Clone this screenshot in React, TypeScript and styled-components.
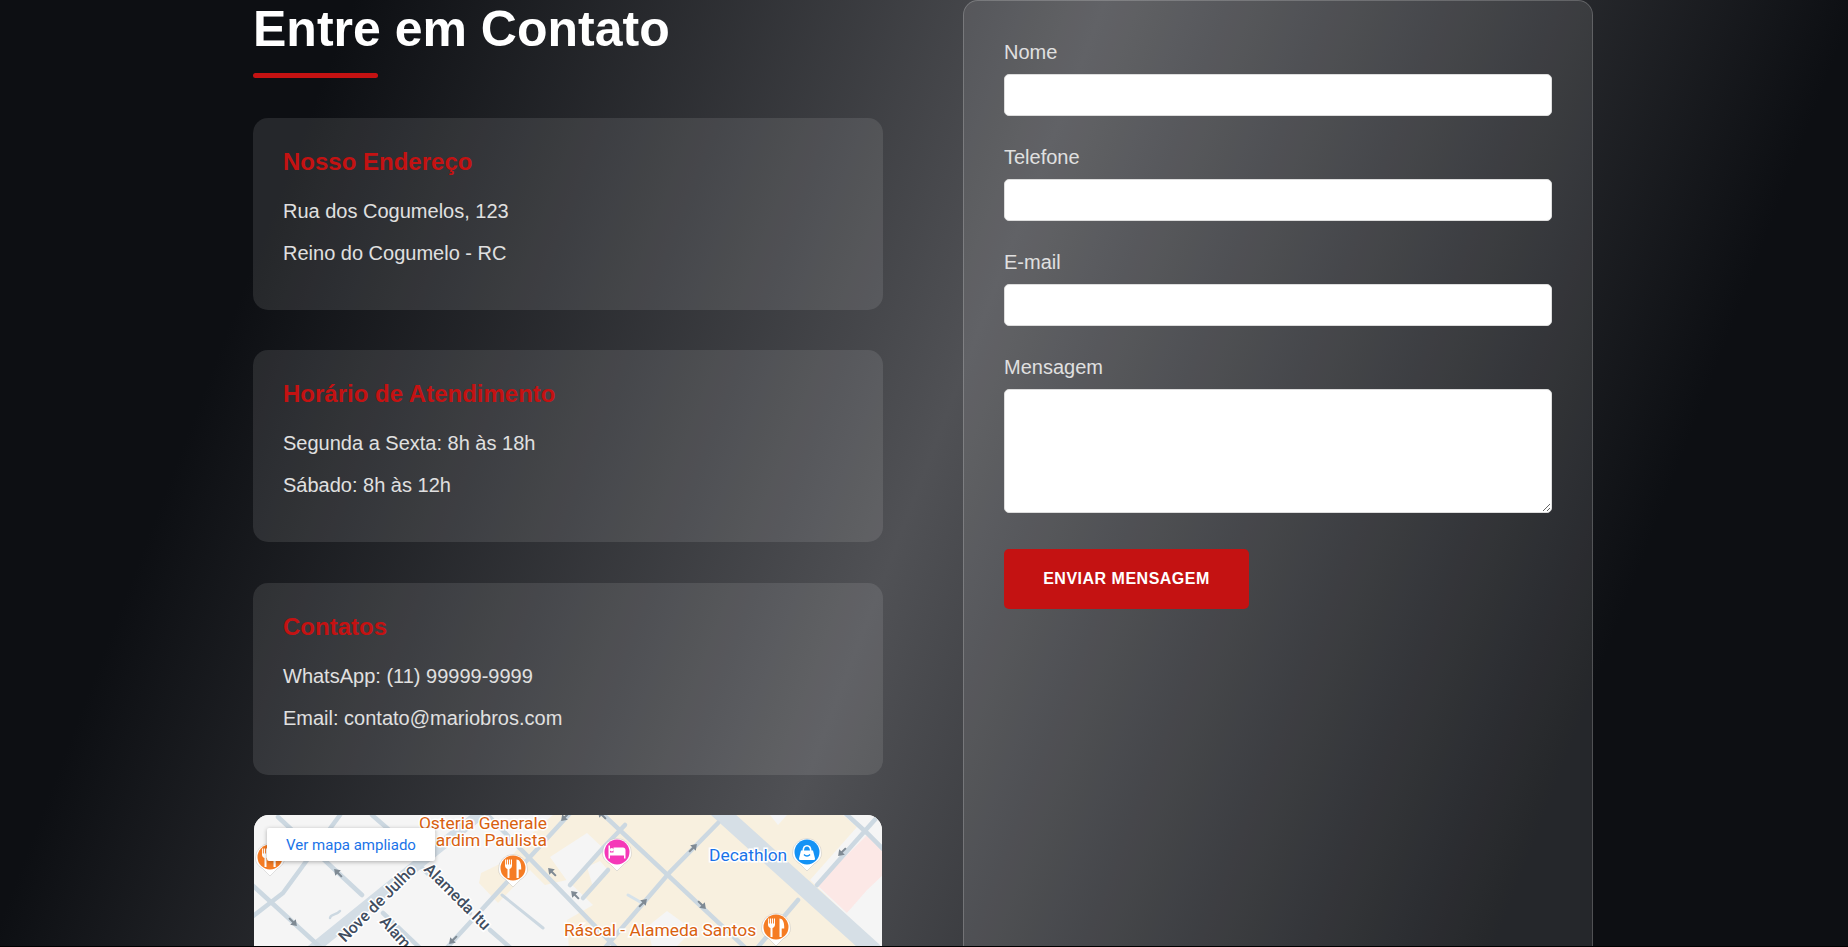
import React from 'react';
import styled, { createGlobalStyle } from 'styled-components';

const GlobalStyle = createGlobalStyle`
  html, body {
    margin: 0;
    padding: 0;
    height: 100%;
    overflow: hidden;
    background: #000;
  }
  * {
    box-sizing: border-box;
  }
`;

const Page = styled.div`
  height: 946px;
  margin-bottom: 1px;
  padding-right: 2px;
  overflow: hidden;
  font-family: 'Liberation Sans', Arial, sans-serif;
  background: linear-gradient(111deg, #0d0f13 16%, #505155 50%, #0d0f13 84%);
`;

const Container = styled.div`
  width: 1340px;
  margin: 0 auto;
  display: grid;
  grid-template-columns: 630px 630px;
  justify-content: space-between;
`;

const InfoColumn = styled.div`
  display: flex;
  flex-direction: column;
`;

const Title = styled.h2`
  margin: 0;
  font-size: 50px;
  line-height: 58px;
  font-weight: 700;
  color: #fff;
`;

const TitleBar = styled.div`
  width: 125px;
  height: 5px;
  margin: 15px 0 40px;
  border-radius: 3px;
  background: #c41212;
`;

const Card = styled.section`
  height: 192px;
  margin-bottom: 40.4px;
  padding: 30px;
  border-radius: 15px;
  background: rgba(255, 255, 255, 0.1);
`;

const CardTitle = styled.h3`
  margin: 0 0 22px;
  font-size: 24px;
  line-height: 28px;
  font-weight: 700;
  color: #c41212;
`;

const CardLine = styled.p`
  margin: 0 0 15px;
  font-size: 20px;
  line-height: 27px;
  color: #e0e0e0;
`;

const MapFrame = styled.div`
  position: relative;
  height: 260px;
  margin: 0 1px;
  border-radius: 15px;
  overflow: hidden;
  background: #f5f5f5;

  svg {
    display: block;
    margin-left: -1px;
  }
`;

const MapLink = styled.a`
  position: absolute;
  top: 13px;
  left: 13px;
  width: 168px;
  height: 33px;
  display: flex;
  align-items: center;
  justify-content: center;
  border-radius: 2px;
  background: #fff;
  box-shadow: 0 1px 4px rgba(0, 0, 0, 0.3);
  font-family: Roboto, sans-serif;
  font-size: 15px;
  color: #1a73e8;
`;

const FormPanel = styled.form`
  height: 980px;
  padding: 40px;
  border: 1px solid rgba(255, 255, 255, 0.2);
  border-radius: 15px;
  background: rgba(255, 255, 255, 0.1);
`;

const Field = styled.div`
  margin-bottom: 30px;
`;

const Label = styled.label`
  display: block;
  margin-bottom: 10px;
  font-size: 20px;
  line-height: 23px;
  color: #e0e0e0;
`;

const TextInput = styled.input`
  display: block;
  width: 100%;
  height: 42px;
  border: 1px solid #ddd;
  border-radius: 5px;
  background: #fff;
`;

const TextArea = styled.textarea`
  display: block;
  width: 100%;
  height: 124px;
  border: 1px solid #ddd;
  border-radius: 5px;
  background: #fff;
  resize: vertical;
`;

const SubmitButton = styled.button`
  display: block;
  width: 245px;
  height: 60px;
  margin-top: 36px;
  border: none;
  border-radius: 5px;
  background: #c41212;
  color: #fff;
  font-family: inherit;
  font-size: 16px;
  font-weight: 700;
  letter-spacing: 0.5px;
  text-transform: uppercase;
`;

const cards = [
  { title: 'Nosso Endereço', lines: ['Rua dos Cogumelos, 123', 'Reino do Cogumelo - RC'] },
  { title: 'Horário de Atendimento', lines: ['Segunda a Sexta: 8h às 18h', 'Sábado: 8h às 12h'] },
  { title: 'Contatos', lines: ['WhatsApp: (11) 99999-9999', 'Email: contato@mariobros.com'] },
];

const Pin: React.FC<{ x: number; y: number; color: string; children?: React.ReactNode }> = ({ x, y, color, children }) => (
  <g transform={`translate(${x} ${y})`}>
    <path d="M-14.500 1a14.500 14.500 0 1 1 29 0c0 5-3 8-7 10.500l-7.500 7.500-7.500-7.500c-4-2.500-7-5.500-7-10.500z" fill="#fff" stroke="rgba(90,90,90,0.25)" strokeWidth="0.7" />
    <circle r="12.500" fill={color} />
    {children}
  </g>
);

const Cutlery = () => (
  <path d="M-8-8.500v6c0 2 1 3 2.500 3.500v9h2V1c1.500-.5 2.500-1.500 2.500-3.500v-6H-2v5h-.9v-5h-1.200v5h-.9v-5h-1.200v5h-.9v-5zM3.500-8.500c3 0 4.700 3.500 4.700 8v2H5.700v8.500H3.500z" fill="#fff" />
);

const BedIcon = () => (
  <path d="M-8.500-6.500H-7V.5H-3.500V-4.500H6C7.500-4.500 8.500-3.500 8.500-2V6.500H7V3.500H-7V6.500H-8.500zM-5.300-.5a1.800 1.800 0 1 1 0-3.600 1.800 1.800 0 0 1 0 3.600z" fill="#fff" />
);

const BagIcon = () => (
  <g>
    <path d="M-3.800-1c0-7 7.600-7 7.600 0" stroke="#fff" strokeWidth="1.600" fill="none" />
    <path d="M-6-1.500H6L8 6.500C8 7.500 7.500 8 6.500 8H-6.500C-7.500 8-8 7.500-8 6.500z" fill="#fff" />
    <path d="M-3 2.500c1.500 2 4.500 2 6 0" stroke="#1492f5" strokeWidth="1.300" fill="none" />
  </g>
);

const Street: React.FC<{ d: string; w?: number; color?: string }> = ({ d, w = 4.5, color = '#ccd8e1' }) => (
  <path d={d} stroke={color} strokeWidth={w} fill="none" strokeLinecap="round" />
);

const Arrow: React.FC<{ x: number; y: number; r: number }> = ({ x, y, r }) => (
  <path transform={`translate(${x} ${y}) rotate(${r})`} d="M-5.500-1h5.500v-3l5.500 4-5.500 4v-3h-5.500z" fill="#7f8a94" />
);

const MapLabel = styled.text<{ $color: string }>`
  font-family: Roboto, sans-serif;
  font-size: 17.400px;
  fill: ${props => props.$color};
  stroke: #fff;
  stroke-width: 3px;
  paint-order: stroke;
`;

const StreetLabel = styled.text`
  font-family: Roboto, sans-serif;
  font-size: 16px;
  font-weight: 500;
  fill: #3f4d5f;
  stroke: #fff;
  stroke-width: 3px;
  paint-order: stroke;
`;

const MapDrawing = () => (
  <svg width="630" height="260" viewBox="0 0 630 260">
    <rect width="630" height="260" fill="#f5f5f5" />
    {/* quarteirões */}
    <path d="M300 0H590L604 12 557 65 630 135H316L314 105 340 90 314 65 292 70 277 55 245 88 226 68 228 58 255 45 277 20z" fill="#f8f0df" />
    <path d="M517 0L525 10 534 0z" fill="#f5f5f5" />
    <path d="M297 42L334 18 350 33 317 70zM334 52L347 46 355 55 340 72zM394 112L414 96 440 115 420 135 400 135z" fill="#f5f5f5" />
    <path d="M614 20L630 35V60L614 75 594 98 564 70z" fill="#fce8e6" />
    <path d="M594 98L630 60V135H585L614 130z" fill="#f5f5f5" />
    {/* ruas */}
    <Street w={17} color="#d6dfe6" d="M465-5L620 135" />
    <Street w={11} color="#d3dde5" d="M55 138L170 45 226 0" />
    <Street d="M320-5L190 137" />
    <Street d="M225-10L370 140" />
    <Street d="M340-10L500 140" />
    <Street d="M350 135L417 57 465 8" />
    <Street d="M317 70L350 33 372 10M330 83L355 55" />
    <Street d="M626 0L564 70M592-2L614 18 634 38" />
    <Street d="M545 85L505 132" />
    <Street w={3} d="M249 80L290 113" />
    <Street w={3} color="#d6e2ea" d="M375 80L389 88" />
    <Street d="M237 115L260 135" />
    <Street d="M25 2L109 80" />
    <Street d="M87 0L30 78-5 105" />
    <Street d="M-3 68L67 132" />
    <Street d="M119 0L165 40" />
    <Street d="M169 53L217 98" />
    <Street d="M130 98L168 134" />
    <Street w={2.500} d="M77 103C77 99 84 100 87 96" />
    <Arrow x={85} y={58} r={225} />
    <Arrow x={40} y={107} r={45} />
    <Arrow x={200} y={125} r={135} />
    <Arrow x={312} y={2} r={135} />
    <Arrow x={349} y={0} r={225} />
    <Arrow x={299} y={57} r={225} />
    <Arrow x={322} y={80} r={225} />
    <Arrow x={390} y={88} r={-45} />
    <Arrow x={440} y={33} r={-45} />
    <Arrow x={449} y={90} r={45} />
    <Arrow x={589} y={37} r={135} />
    {/* marcadores */}
    <Pin x={17} y={42} color="#f57c24"><Cutlery /></Pin>
    <Pin x={260} y={53} color="#f57c24"><Cutlery /></Pin>
    <Pin x={364} y={37} color="#f538b8"><BedIcon /></Pin>
    <Pin x={554} y={37} color="#1492f5"><BagIcon /></Pin>
    <Pin x={523} y={112} color="#f57c24"><Cutlery /></Pin>
    <MapLabel $color="#d9610f" x={294} y={14} textAnchor="end">Osteria Generale</MapLabel>
    <MapLabel $color="#d9610f" x={294} y={31} textAnchor="end">Jardim Paulista</MapLabel>
    <MapLabel $color="#d9610f" x={311} y={121}>Ráscal - Alameda Santos</MapLabel>
    <MapLabel $color="#1a73e8" x={456} y={46}>Decathlon</MapLabel>
    <StreetLabel transform="translate(92 128) rotate(-45)">Nove de Julho</StreetLabel>
    <StreetLabel transform="translate(170 55) rotate(45)">Alameda Itu</StreetLabel>
    <StreetLabel transform="translate(126 107) rotate(48)">Alameda</StreetLabel>
  </svg>
);

const App: React.FC = () => (
  <Page>
    <GlobalStyle />
    <Container>
      <InfoColumn>
        <Title>Entre em Contato</Title>
        <TitleBar />
        {cards.map(card => (
          <Card key={card.title}>
            <CardTitle>{card.title}</CardTitle>
            {card.lines.map(line => <CardLine key={line}>{line}</CardLine>)}
          </Card>
        ))}
        <MapFrame>
          <MapDrawing />
          <MapLink>Ver mapa ampliado</MapLink>
        </MapFrame>
      </InfoColumn>
      <FormPanel>
        <Field>
          <Label>Nome</Label>
          <TextInput />
        </Field>
        <Field>
          <Label>Telefone</Label>
          <TextInput />
        </Field>
        <Field>
          <Label>E-mail</Label>
          <TextInput />
        </Field>
        <Field>
          <Label>Mensagem</Label>
          <TextArea />
        </Field>
        <SubmitButton type="button">Enviar mensagem</SubmitButton>
      </FormPanel>
    </Container>
  </Page>
);

export default App;
